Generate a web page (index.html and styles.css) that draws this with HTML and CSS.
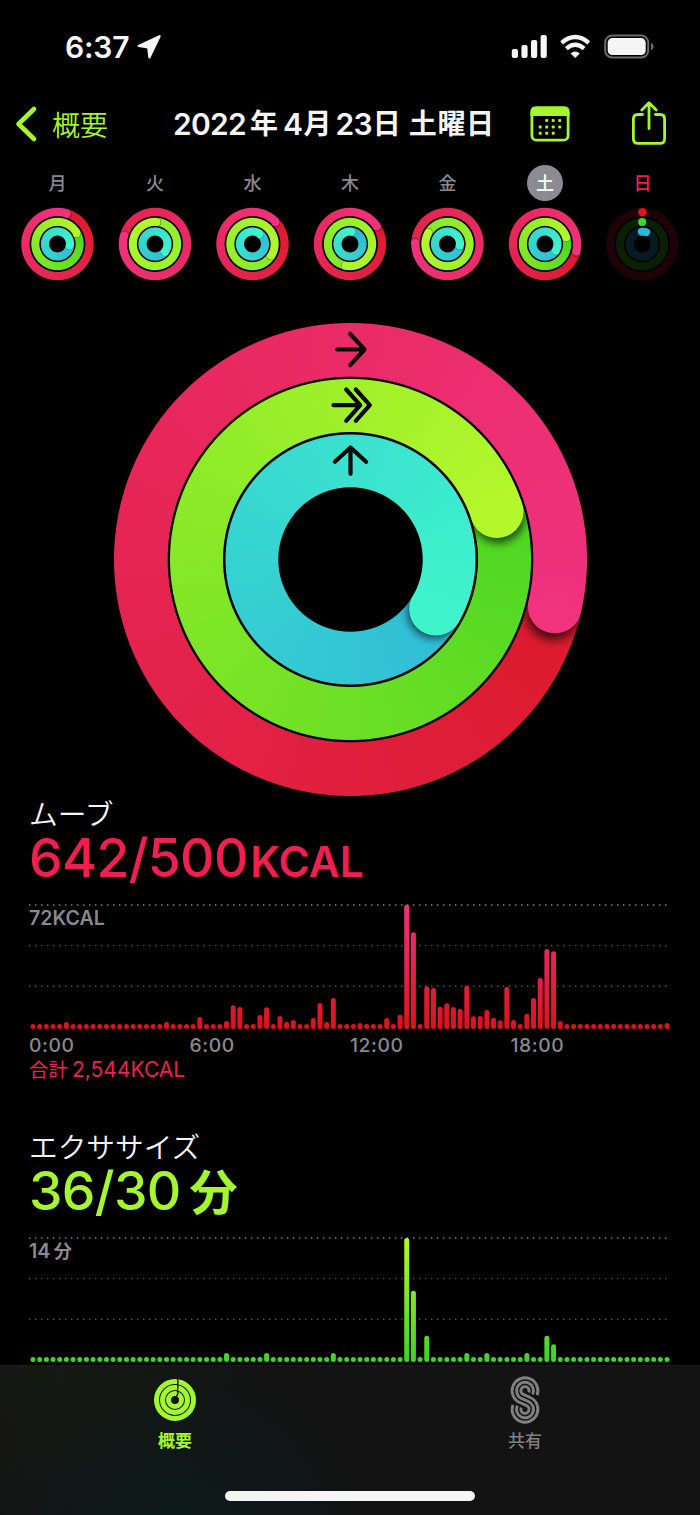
FILE: index.html
```html
<!DOCTYPE html>
<html lang="ja">
<head>
<meta charset="utf-8">
<title>アクティビティ</title>
<link rel="stylesheet" href="styles.css">
</head>
<body>
<div class="status">
  <span class="clock">6:37</span>
  <svg class="loc" width="26" height="26" viewBox="0 0 26 26"><path d="M23.600 2.200 13.400 23.400 12.200 13.300 2.600 11.900Z" fill="#f5f5f5" stroke="#f5f5f5" stroke-width="2.200" stroke-linejoin="round"/></svg>
  <svg class="signals" width="144" height="26" viewBox="0 0 144 26">
    <g fill="#f5f5f5">
      <rect x="1.8" y="15" width="6.2" height="9" rx="2"/><rect x="11.4" y="11" width="6.2" height="13" rx="2"/><rect x="21" y="6" width="6.2" height="18" rx="2"/><rect x="30.6" y="1" width="6.2" height="23" rx="2"/>
      <path d="M65.2 24 60.6 19.4Q65.2 15.8 69.8 19.4Z"/>
    </g>
    <g fill="none" stroke="#f5f5f5" stroke-width="4.2">
      <path d="M51.6 8.8Q65.2-2.8 78.8 8.8"/><path d="M56.3 14.6Q65.2 7 74.1 14.6"/>
    </g>
    <rect x="95.2" y="1.6" width="43" height="22" rx="7" fill="none" stroke="#6b6b6b" stroke-width="2"/>
    <rect x="97.700" y="4.100" width="38" height="17" rx="4.600" fill="#f5f5f5"/>
    <path d="M141 9q2.6.8 2.6 3.6T141 16.200Z" fill="#6b6b6b"/>
  </svg>
</div>

<header class="nav">
  <svg class="chev" width="24" height="38" viewBox="0 0 24 38"><path d="M20 4 4.500 19 20 34" fill="none" stroke="#a5f72d" stroke-width="4.600" stroke-linecap="round" stroke-linejoin="round"/></svg>
  <span class="back">概要</span>
  <h1 class="title"><span class="num">2022</span><span class="year">年</span><span class="num month">4</span><span class="unit">月</span><span class="num day">23</span><span class="unit">日</span><span class="dow">土曜日</span></h1>
  <svg class="cal" width="40" height="36" viewBox="0 0 40 36">
    <rect x="1.900" y="2" width="36.200" height="32.200" rx="4.500" fill="none" stroke="#a5f72d" stroke-width="2.800"/>
    <path d="M.5 10V5.500Q.5.600 5.500.600h29q5 0 5 4.900V10Z" fill="#a5f72d"/>
    <g fill="#a5f72d"><rect x="15.200" y="13" width="3" height="3" rx="1"/><rect x="21.700" y="13" width="3" height="3" rx="1"/><rect x="28.200" y="13" width="3" height="3" rx="1"/><rect x="8.700" y="19.500" width="3" height="3" rx="1"/><rect x="15.200" y="19.500" width="3" height="3" rx="1"/><rect x="21.700" y="19.500" width="3" height="3" rx="1"/><rect x="28.200" y="19.500" width="3" height="3" rx="1"/><rect x="8.700" y="25.700" width="3" height="3" rx="1"/><rect x="15.200" y="25.700" width="3" height="3" rx="1"/><rect x="21.700" y="25.700" width="3" height="3" rx="1"/></g>
  </svg>
  <svg class="share" width="36" height="46" viewBox="0 0 36 46" fill="none" stroke="#a5f72d" stroke-width="2.800" stroke-linecap="round" stroke-linejoin="round">
    <path d="M11.500 13.500H7q-4.600 0-4.600 4.600v19.700q0 4.600 4.600 4.600h22q4.600 0 4.600-4.600V18.100Q33.600 13.500 29 13.500h-4.500M18 27.500V2.500M10.800 8.900 18 1.700l7.200 7.200"/>
  </svg>
</header>

<div class="week" id="week"></div>

<main class="content">
  <div class="hero" id="hero"></div>
  <section class="metric move">
    <h2>ムーブ</h2>
    <p class="value"><span class="digits">642/500</span><span class="kcal">KCAL</span></p>
    <div class="chart" id="moveChart"></div>
    <div class="hours"><span>0:00</span><span>6:00</span><span>12:00</span><span>18:00</span></div>
    <p class="total"><span>合計</span><span class="sum">2,544KCAL</span></p>
  </section>
  <section class="metric exercise">
    <h2>エクササイズ</h2>
    <p class="value"><span class="digits">36/30</span><span class="minutes">分</span></p>
    <div class="chart" id="exChart"></div>
  </section>
</main>

<nav class="tabs">
  <div class="tabrow">
    <div class="tab on">
      <svg width="44" height="50" viewBox="-22 -25 44 50">
        <g fill="none" stroke="#a5f72d" stroke-width="5"><circle r="18.500"/><circle r="12.500"/><circle r="6.500"/></g>
        <path d="M2.200-21.500Q4-18.500 2.400-15.600Q4-12.500 2.400-9.700Q4-6.500 1.500-3.600" fill="none" stroke="#14180f" stroke-width="1.300"/>
      </svg>
      <span>概要</span>
    </div>
    <div class="tab">
      <svg width="44" height="50" viewBox="-22 -25 44 50"><g id="ess" fill="none" stroke="#808080" stroke-width="2.900"></g></svg>
      <span>共有</span>
    </div>
  </div>
  <div class="home"></div>
</nav>
<script src="app.js"></script>
</body>
</html>
```
FILE: styles.css
```css
* { box-sizing: border-box; margin: 0; padding: 0; }
body {
  width: 700px; height: 1515px; overflow: hidden;
  display: flex; flex-direction: column;
  background: #000; color: #f5f5f5;
  font-family: Inter, "Noto Sans CJK JP", sans-serif;
}
svg { display: block; flex: none; }
.status { display: flex; align-items: center; height: 94px; padding: 0 46px 0 65px; }
.clock { font-size: 30px; font-weight: 600; letter-spacing: -0.2px; width: 71px; white-space: nowrap; }
.signals { margin-left: auto; }
.nav { display: flex; align-items: center; height: 60px; padding: 0 33px 0 14px; }
.back { margin-left: 14px; width: 121px; font-size: 28px; font-weight: 350; color: #a5f72d; }
.title { display: flex; align-items: center; width: 357px; font-size: 28px; line-height: 40px; font-weight: 600; white-space: nowrap; }
.title .num { font-size: 30px; letter-spacing: -0.7px; }
.title .year { margin-left: 4px; }
.title .month { margin-left: 5px; }
.title .unit { margin-left: 1px; }
.title .day { margin-left: 4px; }
.title .dow { margin-left: 8px; letter-spacing: 0.6px; }
.share { margin-left: auto; }
.week { display: grid; grid-template-columns: repeat(7, 1fr); height: 168px; padding: 11px 8.75px 0; }
.weekday { display: flex; flex-direction: column; align-items: center; gap: 7px; }
.weekday span {
  width: 36px; height: 36px; border-radius: 50%;
  font-size: 18px; font-weight: 500; line-height: 37px; text-align: center; color: #89898e;
}
.weekday.selected span { background: #8c8b92; color: #fff; }
.weekday.today span { color: #f21d50; }
.content { flex: 1; overflow: hidden; }
.hero { display: grid; justify-content: center; padding: 1px 0 0 1px; }
.rings { display: grid; place-items: center; margin: -1px; }
.rings > * { grid-area: 1 / 1; }
.rings > svg { z-index: 1; }
.metric { height: 333.600px; padding: 3.500px 29px 0; }
.metric h2 { font-size: 28.700px; font-weight: 350; line-height: 30px; height: 28px; }
.value { display: flex; align-items: baseline; height: 60px; line-height: 60px; font-weight: 500; }
.move .value { color: #f01f50; }
.exercise .value { color: #a5f72d; }
.digits { font-size: 53.500px; letter-spacing: -0.700px; }
.kcal { margin-left: 2.500px; font-size: 42.500px; font-weight: 580; }
.minutes { margin-left: 9px; font-size: 48px; font-weight: 700; }
.chart { height: 135px; margin: 11.400px 0 0 -29px; }
.chart text { font-size: 19.600px; font-weight: 600; fill: #89898e; }
.hours { display: grid; grid-template-columns: repeat(4, 160.500px); height: 24px; margin-top: -0.700px; line-height: 24px; font-size: 19.300px; font-weight: 550; color: #89898e; letter-spacing: 0.600px; }
.total { display: flex; align-items: center; height: 26px; line-height: 26px; font-size: 19.500px; font-weight: 400; color: #f01f50; }
.sum { margin-left: 4px; font-size: 21px; }
.tabs {
  height: 150px; padding-top: 10px;
  background: radial-gradient(circle at 170px 190px, rgba(8, 32, 32, .7), transparent 200px), radial-gradient(circle at 60px 10px, rgba(26, 30, 20, .5), transparent 180px), #131313;
  display: flex; flex-direction: column; align-items: center;
  border-top: 1px solid #1b1b1b;
}
.tabrow { display: grid; grid-template-columns: 1fr 1fr; width: 700px; height: 115px; }
.tab { display: flex; flex-direction: column; align-items: center; color: #808080; font-size: 17px; font-weight: 500; line-height: 26px; gap: 3px; margin-top: -1px; }
.tab.on { color: #a5f72d; font-weight: 700; }
.home { width: 250px; height: 10px; border-radius: 5px; background: #f5f5f5; }
```
FILE: app.js
```js
const point = (r, deg) => {
  const a = deg * Math.PI / 180;
  return [r * Math.sin(a), -r * Math.cos(a)];
};

const SHADES = [
  { from: '#dc1a2c', to: '#f0327f' },
  { from: '#4ed622', to: '#b4f72c' },
  { from: '#30bcd6', to: '#3ff4cb' }
];

// Annular sector used to keep a shadow or a cap inside its band.
function sector(ro, ri, start, stop) {
  return `M${point(ro, start)}A${ro} ${ro} 0 0 1 ${point(ro, stop)}L${point(ri, stop)}A${ri} ${ri} 0 0 0 ${point(ri, start)}Z`;
}

// Concentric rings: masked conic gradients, with caps and glyphs in an overlay.
let uid = 0;
function rings(outer, bands, ends, starts, glyphs = '') {
  let layers = '', overlay = '';
  const R = outer + 1;
  const shade = outer > 100 ? .65 : .4;
  bands.forEach(([ro, ri], i) => {
    const end = ends[i];
    const from = (starts && starts[i]) || SHADES[i].from, to = SHADES[i].to;
    const mask = `radial-gradient(circle closest-side, transparent ${ri - .5}px, #000 ${ri + .5}px, #000 ${ro - .5}px, transparent ${ro + .5}px)`;
    layers += `<div style="width:${R * 2}px;height:${R * 2}px;background:conic-gradient(from ${end}deg, ${from}, ${to});-webkit-mask:${mask};mask:${mask}"></div>`;
    const mid = (ro + ri) / 2, w = (ro - ri) / 2;
    const [x, y] = point(mid, end), [sx, sy] = point(mid, end + 2);
    const id = 'r' + uid++;
    overlay += `<clipPath id="${id}s"><path d="${sector(ro, ri, end + .6, end + 70)}"/></clipPath>
      <clipPath id="${id}c"><path d="${sector(ro, ri, end - 2, end + 70)}"/></clipPath>
      <g clip-path="url(#${id}s)"><circle cx="${sx}" cy="${sy}" r="${w}" fill="#000" opacity="${shade}" style="filter:blur(${w * .17}px)"/></g>
      <g clip-path="url(#${id}c)"><circle cx="${x}" cy="${y}" r="${w + .2}" fill="${to}"/></g>`;
  });
  return `<div class="rings">${layers}<svg width="${R * 2}" height="${R * 2}" viewBox="${-R} ${-R} ${R * 2} ${R * 2}">${overlay}${glyphs}</svg></div>`;
}

const SMALL = [[36.2, 27.9], [26.2, 18.1], [16.6, 8.4]];
const emptyRings = () => {
  const track = ['#1e0306', '#0b1f05', '#061a22'];
  const circles = SMALL.map(([o, i], k) => `<circle r="${(o + i) / 2}" fill="none" stroke="${track[k]}" stroke-width="${o - i}"/>`).join('');
  return `<div class="rings"><svg width="74.4" height="74.4" viewBox="-37.2 -37.2 74.4 74.4">${circles}
    <circle cx=".3" cy="-32" r="4.2" fill="#e0141e"/><circle cy="-22.1" r="4" fill="#42d822"/>
    <path d="M-.3-12.5Q2.300-12.700 3.900-12" fill="none" stroke="#2eb4d8" stroke-width="8" stroke-linecap="round"/></svg></div>`;
};

const days = [
  ['月', [17, 60, 95]],
  ['火', [285, 3, 127], ['#e1244e', '#8fee2b', null]],
  ['水', [46, 121, 36], [null, '#86ea2a', null]],
  ['木', [56, 192, 5], [null, '#7fe82a', '#2cb2d6']],
  ['金', [272, 301, 95], ['#e1244a', '#86ea2a', null]],
  ['土', [103, 72, 120]],
  ['日', null]
];
document.getElementById('week').innerHTML = days.map(([name, ends, starts], i) =>
  `<div class="weekday${i === 5 ? ' selected' : i === 6 ? ' today' : ''}"><span>${name}</span>${ends ? rings(36.2, SMALL, ends, starts) : emptyRings()}</div>`).join('');

const glyphs = `<g fill="none" stroke="#080808" stroke-width="4.2" stroke-linecap="round" stroke-linejoin="round">
  <path d="M-13.300-210H14M-.3-225.700 14-210-.3-194.300"/>
  <path d="M-17-154.300H9.700M-4.300-170 9.700-154.300-4.300-138.700M5.300-170 19.300-154.300 5.300-138.700"/>
  <path d="M0-112V-85.700M-15.600-97.700 0-112 15.600-97.700"/></g>`;
document.getElementById('hero').innerHTML =
  rings(236.5, [[236.5, 182.8], [180.5, 127.5], [125, 72.2]], [102.9, 71.8, 120.1], null, glyphs);

// Quarter-hour bars; every slot without a value is a dot.
function chart(id, label, top, bottom, data) {
  let bars = '';
  for (let i = 0; i < 96; i++) {
    const h = data[i] || 5;
    bars += `<rect x="${33 + i * 6.674 - 2.5}" y="${130 - h}" width="5" height="${h}" rx="2.5"/>`;
  }
  const line = (y, c) => `<path d="M29 ${y}H671" stroke="${c}" stroke-width="1.4" stroke-dasharray="1.4 4.6"/>`;
  document.getElementById(id).innerHTML = `<svg width="700" height="134" viewBox="0 0 700 134">
    <linearGradient id="${id}g" gradientUnits="userSpaceOnUse" x1="0" x2="0" y1="6" y2="130"><stop stop-color="${top}"/><stop offset="1" stop-color="${bottom}"/></linearGradient>
    ${line(6, '#86868a')}${line(46.6, '#535356')}${line(87.2, '#535356')}
    <text x="29" y="26">${label}</text><g fill="url(#${id}g)">${bars}</g></svg>`;
}
chart('moveChart', '72KCAL', '#f13184', '#dc1219', {
  5: 7, 20: 7, 25: 12, 29: 8, 30: 23.7, 31: 22, 34: 14, 35: 21.7, 37: 13, 38: 7, 39: 9, 42: 11, 43: 26, 44: 7, 45: 31,
  49: 6, 53: 11, 55: 14.3, 56: 124.3, 57: 96.7, 59: 42.7, 60: 41, 61: 22.3, 62: 25.7, 63: 22, 64: 20.3, 65: 43.3,
  66: 12.7, 67: 13, 68: 19, 69: 11.3, 70: 8.7, 71: 42, 72: 9, 74: 15.3, 75: 31, 76: 51, 77: 80, 78: 77.7, 79: 8, 95: 6
});
chart('exChart', '14<tspan dx="3.5" font-size="18">分</tspan>', '#b4f62c', '#3cd422', {
  29: 9, 35: 9, 45: 9, 56: 124, 57: 71.3, 59: 26.3, 65: 9, 68: 9, 74: 9, 77: 26.3, 78: 17.7
});

// Three parallel strands forming an S from two loops.
const d = 9.3, nx = -0.407, ny = 0.914;
document.getElementById('ess').innerHTML = [12.9, 8.5, 4.1].map(r => {
  const q = 17 - r;
  const cut = rad => rad > 10 ? .35 : .45;
  const k = cut(r), m = cut(q);
  const s = [r * Math.cos(k), -d + r * Math.sin(k)], t = [r * nx, -d + r * ny];
  const u = [-q * nx, d - q * ny], v = [-q * Math.cos(m), d - q * Math.sin(m)];
  return `<path d="M${s}A${r} ${r} 0 1 0 ${t}L${u}A${q} ${q} 0 1 1 ${v}"/>`;
}).join('');
```
